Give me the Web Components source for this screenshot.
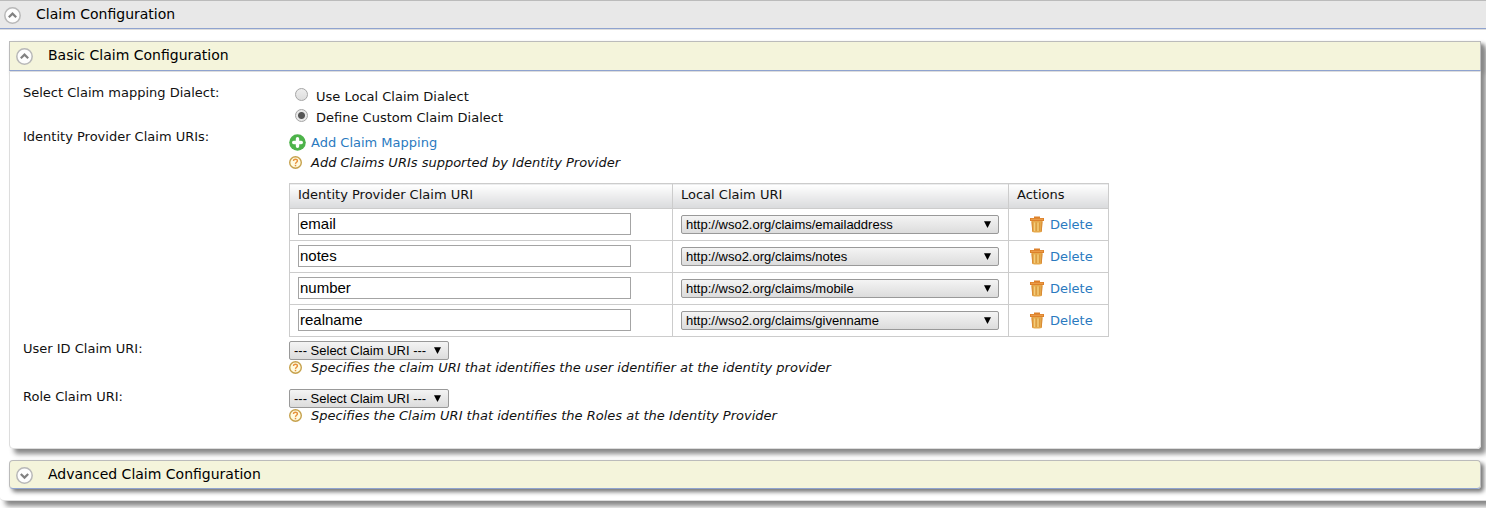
<!DOCTYPE html>
<html lang="en">
<head>
<meta charset="utf-8">
<title>Claim Configuration</title>
<style>
  body {
    margin: 0;
    background: #fff;
    color: #111;
    font: 13px/21px "DejaVu Sans", Verdana, sans-serif;
    overflow-x: hidden;
  }
</style>
</head>
<body>
<claim-page></claim-page>

<script>
const ICONS = {
  up: `<svg width="17" height="17" viewBox="0 0 17 17" aria-hidden="true"><circle cx="8.5" cy="8.5" r="7.7" fill="#fdfdfd" stroke="#b8b8b8" stroke-width="1.500"/><path d="M4.800 10.200 8.500 6.600 12.200 10.200" fill="none" stroke="#808080" stroke-width="2.200"/></svg>`,
  down: `<svg width="17" height="17" viewBox="0 0 17 17" aria-hidden="true"><circle cx="8.5" cy="8.5" r="7.7" fill="#fdfdfd" stroke="#b8b8b8" stroke-width="1.500"/><path d="M4.800 7 8.500 10.600 12.200 7" fill="none" stroke="#808080" stroke-width="2.200"/></svg>`,
  add: `<svg width="17" height="17" viewBox="0 0 17 17" aria-hidden="true"><circle cx="8.5" cy="8.5" r="8.3" fill="#4db34a"/><path d="M8.500 4.700v7.600M4.700 8.500h7.600" stroke="#fff" stroke-width="3.400" stroke-linecap="round"/></svg>`,
  help: `<svg width="13" height="13" viewBox="0 0 13 13" aria-hidden="true"><circle cx="6.5" cy="6.5" r="5.8" fill="#fffbe0" stroke="#c6a14c" stroke-width="1.400"/><path d="M4.500 5C4.500 2.500 8.500 2.700 8.400 4.900 8.300 6.300 6.600 6.200 6.500 7.900" fill="none" stroke="#e8913a" stroke-width="1.400"/><path d="M6.500 8.800v1.500" stroke="#e8913a" stroke-width="1.500"/></svg>`,
  trash: `<svg width="14" height="17" viewBox="0 0 14 17" aria-hidden="true"><path d="M1.500 5h11l-.8 11q-4.700 1.200-9.400 0Z" fill="#e6aa4c"/><path d="M2 5.500l.7 10M12 5.500l-.7 10" stroke="#d98a35" fill="none"/><path d="M4.600 6.500v8.500M8 6.500v8.500" stroke="#f3cd7c" stroke-width="1.300"/><path d="M6.200 6.500v8.500M9.600 6.500v8.500" stroke="#d6943a" stroke-width=".8"/><path d="M0 2h4V.5h6V2h4v3H0Z" fill="#dd812b"/><path d="M1 3.300h12" stroke="#eea352"/></svg>`,
  arrow: `<svg width="7" height="8" viewBox="0 0 7 8" aria-hidden="true"><path d="M0 .3h7L3.500 7Z" fill="#000"/></svg>`
};

const FIELD_STYLES = `
  select {
    appearance: none; box-sizing: border-box; margin: 0; height: 19px; padding: 0 20px 0 4px;
    border: 1px solid #999; border-radius: 2px; color: #000;
    background: linear-gradient(#f4f4f4, #dcdcdc);
    font: 13px/17px "Liberation Sans", Arial, sans-serif;
  }
  .pick { display: grid; grid-template-columns: 1fr; align-items: center; }
  .pick > * { grid-area: 1 / 1; }
  .pick svg { justify-self: end; margin-right: 8px; pointer-events: none; }
`;

function define(name, render) {
  customElements.define(name, class extends HTMLElement {
    connectedCallback() {
      if (this.shadowRoot) return;
      this.attachShadow({ mode: "open" }).innerHTML = render(this);
    }
  });
}

define("claim-icon", el => `
  <style>:host { display: inline-flex; flex: none; } svg { display: block; }</style>
  ${ICONS[el.getAttribute("name")]}`);

define("claim-panel", el => {
  const open = el.hasAttribute("open");
  return `
  <style>
    :host { display: block; border-radius: 4px; box-shadow: 5px 5px 5px #888; }
    :host(:not([open])) { box-shadow: 3px 3px 4px #777; }
    h2 { margin: 0; font: inherit; }
    button {
      display: flex; align-items: center; box-sizing: border-box; width: 100%; height: 30px;
      margin: 0; padding: 0 6px 2px; gap: 15px; text-align: left; color: #000; font: inherit; font-size: 14px;
      background: #f4f4db; border: 1px solid #bbb; border-bottom-color: #8fa3cf;
    }
    claim-icon { padding-top: 2px; }
    :host([open]) h2 { box-shadow: 3px 3px 4px #888; }
    :host(:not([open])) button { height: 29px; padding-bottom: 0; border-radius: 4px; }
    .body { background: #fff; border: 1px solid #ddd; border-radius: 0 0 4px 4px; }
    :host([main]) { margin-right: -8px; }
    :host([main]) h2 { box-shadow: none; }
    :host([main]) button { height: 29px; padding: 0 4px; background: #e8e8e8; border-left: 0; }
    :host([main]) .body { padding: 11px 12px 11px 9px; border-left: 0; }
  </style>
  <h2><button type="button" aria-expanded="${open}">
    <claim-icon name="${open ? "up" : "down"}"></claim-icon><span>${el.getAttribute("heading")}</span>
  </button></h2>
  ${open ? `<div class="body"><slot></slot></div>` : ""}`;
});

define("claim-row", () => `
  <style>
    :host { display: grid; grid-template-columns: 266px 1fr; }
    .label { line-height: 18px; }
  </style>
  <div class="label"><slot name="label"></slot></div>
  <div><slot></slot></div>`);

define("claim-help", () => `
  <style>
    :host { display: flex; align-items: center; gap: 9px; font-style: italic; line-height: 16px; }
    claim-icon { height: 14px; }
  </style>
  <claim-icon name="help"></claim-icon><span><slot></slot></span>`);

define("dialect-choice", () => `
  <style>
    :host { display: block; }
    .choices { padding: 2px 0 0 6px; }
    .choices label { display: flex; align-items: center; gap: 8px; }
    input {
      appearance: none; box-sizing: border-box; width: 13px; height: 13px; margin: 0 0 4px;
      border: 1px solid #a5a5a5; border-radius: 50%; background: linear-gradient(#eee, #ddd);
    }
    input:checked { background: radial-gradient(circle, #555 0 3px, #e8e8e8 4px); }
  </style>
  <claim-row>
    <span slot="label" id="dialect">Select Claim mapping Dialect:</span>
    <div class="choices" role="radiogroup" aria-labelledby="dialect">
      <label><input type="radio" name="dialect">Use Local Claim Dialect</label>
      <label><input type="radio" name="dialect" checked>Define Custom Claim Dialect</label>
    </div>
  </claim-row>`);

const MAPPINGS = [["email", "emailaddress"], ["notes", "notes"], ["number", "mobile"], ["realname", "givenname"]];

define("claim-mappings", () => `
  <style>
    ${FIELD_STYLES}
    :host { display: block; }
    a { display: flex; align-items: center; gap: 5px; color: #2a7abf; text-decoration: none; }
    .add { width: fit-content; }
    .content { padding: 4px 0 3px; }
    .content > claim-help { margin-top: 2px; }
    table { width: 820px; margin-top: 12px; border-collapse: collapse; table-layout: fixed; }
    th, td { border: 1px solid #ccc; padding: 0 8px; text-align: left; font-weight: normal; }
    th { height: 21px; padding-bottom: 3px; background: linear-gradient(#fff, #d9dadc); }
    td { height: 31px; }
    .remote { width: 366px; } .local { width: 319px; } .actions { width: 83px; }
    input {
      display: block; box-sizing: border-box; width: 333px; height: 22px; margin: 0 0 2px; padding: 0 1px;
      border: 1px solid #a4a4a4; color: #000; font: 15px/20px "Liberation Sans", Arial, sans-serif;
    }
    td .pick { width: 318px; }
    td a { padding-left: 13px; gap: 6px; }
  </style>
  <claim-row>
    <span slot="label">Identity Provider Claim URIs:</span>
    <div class="content">
      <a class="add" href="#add"><claim-icon name="add"></claim-icon>Add Claim Mapping</a>
      <claim-help>Add Claims URIs supported by Identity Provider</claim-help>
      <table>
        <thead><tr><th class="remote" id="remote">Identity Provider Claim URI</th><th class="local" id="local">Local Claim URI</th><th class="actions">Actions</th></tr></thead>
        <tbody>${MAPPINGS.map(([remote, local]) => `
          <tr>
            <td><input type="text" value="${remote}" aria-labelledby="remote"></td>
            <td><div class="pick"><select aria-labelledby="local"><option>http://wso2.org/claims/${local}</option></select>${ICONS.arrow}</div></td>
            <td><a href="#delete"><claim-icon name="trash"></claim-icon>Delete</a></td>
          </tr>`).join("")}
        </tbody>
      </table>
    </div>
  </claim-row>`);

define("claim-uri-field", el => `
  <style>
    ${FIELD_STYLES}
    :host { display: block; height: 48px; }
    .pick { width: 160px; padding-top: 1px; }
  </style>
  <claim-row>
    <label slot="label" for="uri">${el.getAttribute("label")}</label>
    <div class="pick"><select id="uri"><option>--- Select Claim URI ---</option></select>${ICONS.arrow}</div>
    <claim-help>${el.getAttribute("help")}</claim-help>
  </claim-row>`);

define("claim-page", () => `
  <style>
    :host { display: block; padding-bottom: 7px; }
    form { padding: 12px 13px; }
    .advanced { margin-top: 11px; }
  </style>
  <claim-panel main open heading="Claim Configuration">
    <claim-panel open heading="Basic Claim Configuration">
      <form>
        <dialect-choice></dialect-choice>
        <claim-mappings></claim-mappings>
        <claim-uri-field label="User ID Claim URI:" help="Specifies the claim URI that identifies the user identifier at the identity provider"></claim-uri-field>
        <claim-uri-field label="Role Claim URI:" help="Specifies the Claim URI that identifies the Roles at the Identity Provider"></claim-uri-field>
      </form>
    </claim-panel>
    <claim-panel class="advanced" heading="Advanced Claim Configuration"></claim-panel>
  </claim-panel>`);
</script>
</body>
</html>
